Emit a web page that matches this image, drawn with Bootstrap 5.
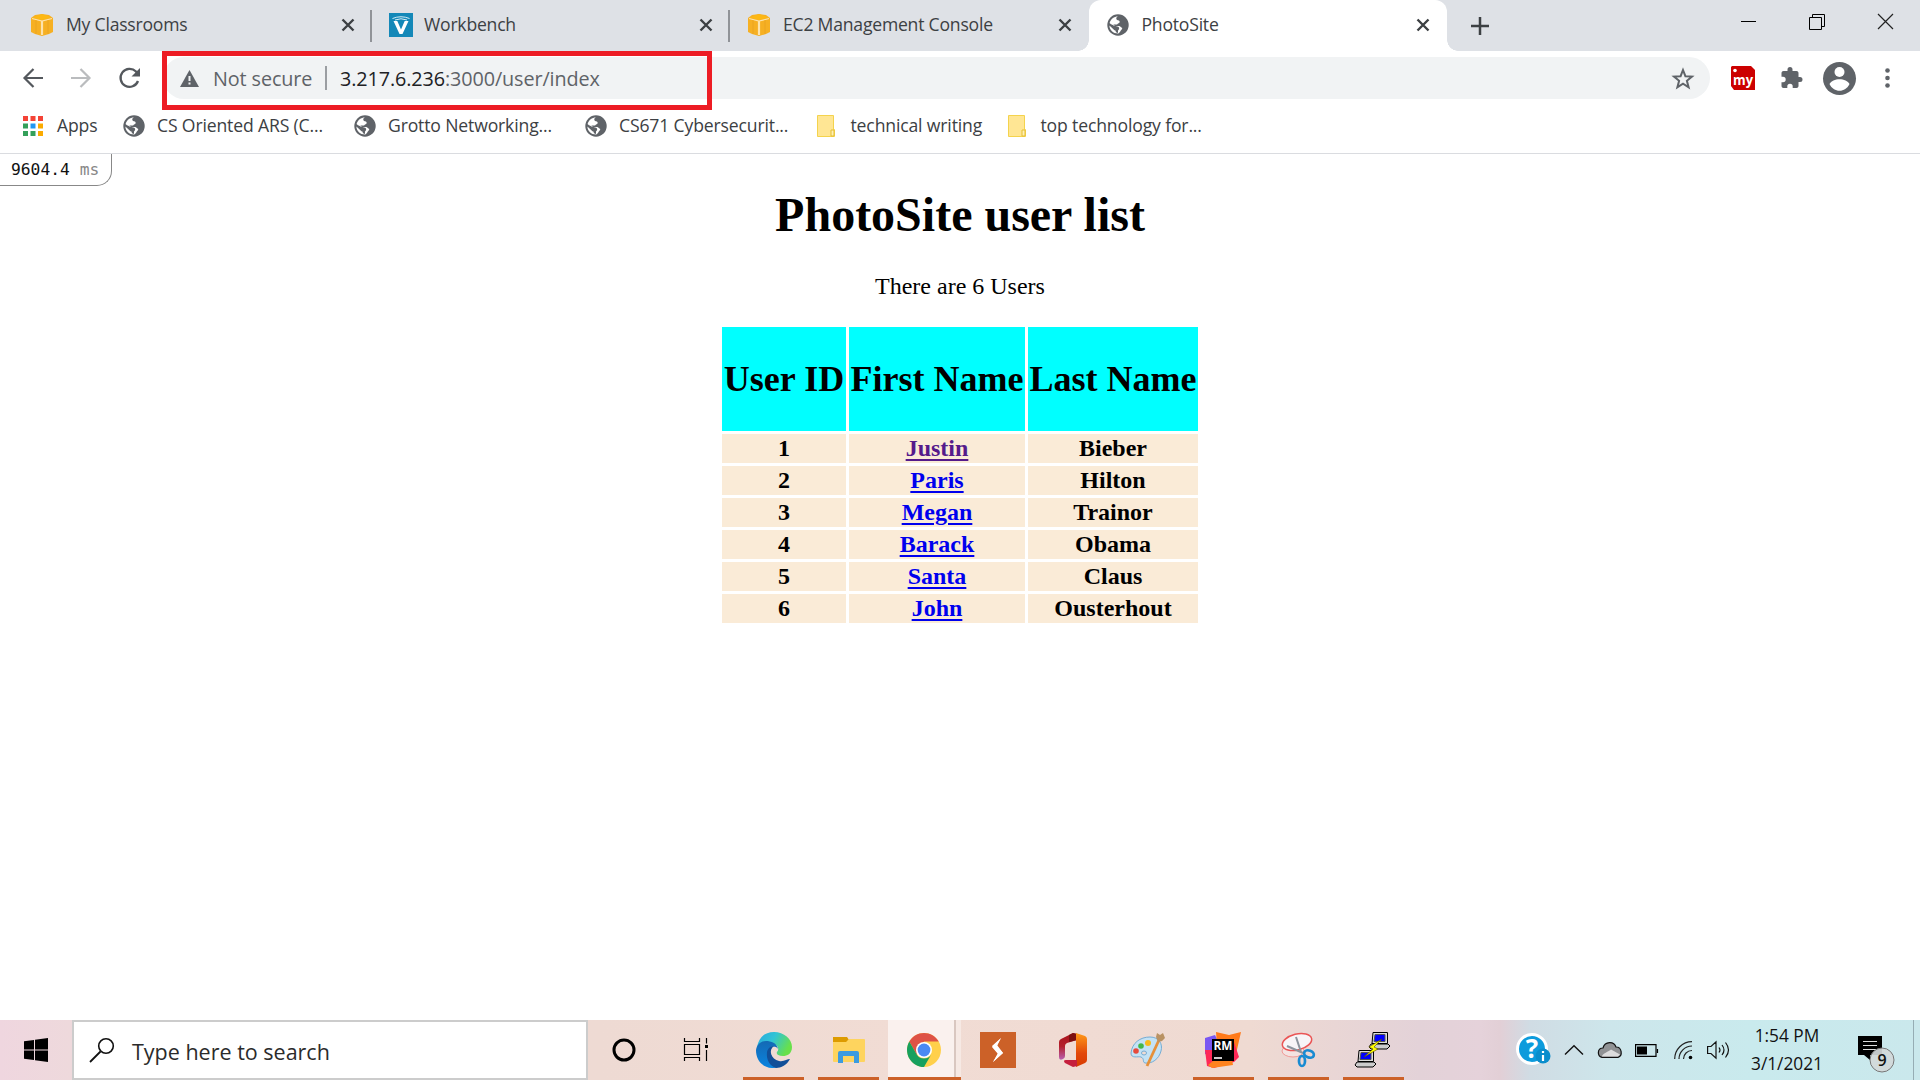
<!DOCTYPE html>
<html lang="en">
<head>
<meta charset="utf-8">
<title>PhotoSite</title>
<link href="https://cdn.jsdelivr.net/npm/bootstrap@5.3.0/dist/css/bootstrap.min.css" rel="stylesheet">
<style>
html,body{height:100%;overflow:hidden}
body{font-family:"Open Sans","Noto Sans",sans-serif;background:#fff;color:#3c4043}
svg{display:block;flex:none;overflow:visible}
.nw{white-space:nowrap;flex:none;line-height:1}
.tabstrip{height:51px;background:#dee1e6;padding-left:13px}
.btab{width:358.5px;height:51px;padding:0 17px 2px 18px;flex:none}
.btab .nw{font-size:17.6px;letter-spacing:-.22px;margin-left:13px;padding-top:1px}
.btab .xicon{margin-left:auto}
.btab.sep{padding-right:15px;border-right:2px solid #909398;border-image:linear-gradient(#0000 11px,#909398 11px,#909398 41px,#0000 41px) 1}
.btab.current{background:#fff;border-radius:12px 12px 0 0;position:relative}
.btab.current::before,.btab.current::after{content:"";position:absolute;bottom:0;width:11px;height:11px}
.btab.current::before{left:-11px;background:radial-gradient(circle at 0 0,#0000 10.5px,#fff 11px)}
.btab.current::after{right:-11px;background:radial-gradient(circle at 100% 0,#0000 10.5px,#fff 11px)}
.toolbar{height:54px;padding-left:23px}
.omni{width:1547px;height:42px;border-radius:21px;background:#f1f3f4;margin-left:23px;padding:0 16px 0 17px;color:#5f6368;flex:none;font-size:19.8px}
.omni .nw{padding-top:1px;letter-spacing:-.1px}
.callout{position:absolute;left:162px;top:51px;width:550px;height:59px;border:5px solid #ed1c24}
.bookmarks{height:49px;border-bottom:1px solid #dadce0;padding:0 0 6px 23px;font-size:17.6px}
.bookmarks .nw{letter-spacing:-.15px;margin-left:12px}
.timing{position:absolute;left:0;top:154px;width:112px;height:32px;border:1px solid #888;border-width:0 1px 1px 0;border-radius:0 0 15px 0;font:16.3px/32px "DejaVu Sans Mono",monospace;padding-left:11px;color:#111;white-space:nowrap}
.timing i{font-style:normal;color:#888}
.page{height:866px;font-family:"Liberation Serif",serif;font-size:24px;color:#000;text-align:center;line-height:27px}
.page h1{font-size:48px;font-weight:700;line-height:54px;margin:0;padding-top:34px}
.page p{margin:31px 0 24px;line-height:27px}
.users{border-collapse:separate;border-spacing:3px;margin:0 auto;font-weight:700}
.users th{background:#0ff;height:104px;font-size:36px;padding:0;line-height:40px}
.users td{background:#faebd7;height:29px;padding:0;line-height:29px}
.users a{color:#00e;text-decoration:underline;text-decoration-thickness:2px;text-underline-offset:3px}
.users a.seen{color:#551a8b}
.taskbar{height:60px;background:linear-gradient(90deg,#efd6df 0,#eed9dc 70px,#eedad3 600px,#f1dcd4 900px,#efdad2 1250px,#e3d2d8 1420px,#e5d2da 1480px,#e2cfd6 1500px,#d0dce4 1530px,#cde6eb 1610px,#c9eaed 1750px,#cae8ec 1920px)}
.startbtn{width:72px}
.searchbox{width:516px;height:60px;background:#fff;border:2px solid #ccc;padding-left:16px;color:#2b2b2b;font-size:21.5px;flex:none}
.searchbox .nw{padding-top:3px}
.app{height:60px;width:61px;flex:none;margin-right:14px;display:flex;align-items:center;justify-content:center}
.app.open{border-bottom:3px solid #cc6128;padding-top:3px}
.app.front{width:73px;margin:0 13px 0 -5.500px;padding-right:1px;background:linear-gradient(90deg,#faf1ee 0 66px,#d9c7c0 66px 68px,#f6e9e4 68px);justify-content:flex-start;padding-left:19px}
.clock{color:#111;font-size:17.3px;text-align:center;width:80px;line-height:28px;flex:none}
</style>
</head>
<body>
<svg width="0" height="0" class="position-absolute">
<defs>
<symbol id="cube" viewBox="0 0 22 22"><path d="M0 4 4 1 11 0l7 1 4 3v14l-4 2-7 2-7-2-4-2z" fill="#f6b023"/><path d="M2 3.500 11 0l9 3.500L11 6z" fill="#fdb813"/><path d="M1 4.500 10.500 7v14M21 4.500 11.500 7v14" fill="none" stroke="#fde3ac" stroke-width="1.200"/><path d="M5 6v14M17 6v14" stroke="#eaa21e" stroke-width=".8"/></symbol>
<symbol id="globe" viewBox="0 0 22 22"><circle cx="11" cy="11" r="10.700" fill="#5f6368"/><path d="M11 2.300c-2 1-2.200 2.500-1 3.700 1.300.6 2.700.3 2.700 2 0 1.500-2 1.300-2.600 2.400H6.600v1.700h5.700c1.600.4 1.500 1.700 3 1.900-.2 2-1.900 2.300-2.300 4l-1.700 1.400C6.500 19.600 2.500 16 2.400 11.400l4.300 4.200c.8 1.300 2.200.3 2.200 2.600L11 19v-2.600c1.500-1 1.600-2.600.2-3.600L8.600 12C4 10.500 3 9.500 2.600 9 3.500 5.500 7 2.500 11 2.300z" fill="#fff"/></symbol>
<symbol id="cross" viewBox="0 0 14 14"><path d="M1.500 1.500l11 11m0-11l-11 11" stroke="#3c4043" stroke-width="2.400"/></symbol>
<symbol id="folder" viewBox="0 0 18 22"><path d="M.5.500h16v14h1v7H.5z" fill="#ffe694" stroke="#f4d34d"/><path d="M14 21v-6h3v6z" fill="#fff0b5" stroke="#e5bf35"/></symbol>
</defs>
</svg>
<div class="d-flex flex-column vh-100 position-relative">
<header class="tabstrip d-flex align-items-center">
 <div class="btab sep d-flex align-items-center"><svg width="22" height="22"><use href="#cube"/></svg><span class="nw">My Classrooms</span><svg class="xicon" width="14" height="14"><use href="#cross"/></svg></div>
 <div class="btab sep d-flex align-items-center"><svg width="24" height="24" viewBox="1 0 24 24"><path fill="#1488b8" d="M0 0h24v24H0z"/><path d="M4.500 8h3.800L12 16.500 15.700 8h3.800L13.500 21h-3z" fill="#fff"/><path d="M3.500 5.500Q12 2 20.500 5.500M6 7q6-2.500 12 0" fill="none" stroke="#d5edf6"/></svg><span class="nw" style="margin-left:10.500px">Workbench</span><svg class="xicon" width="14" height="14"><use href="#cross"/></svg></div>
 <div class="btab d-flex align-items-center"><svg width="22" height="22"><use href="#cube"/></svg><span class="nw">EC2 Management Console</span><svg class="xicon" width="14" height="14"><use href="#cross"/></svg></div>
 <div class="btab current d-flex align-items-center"><svg width="22" height="22"><use href="#globe"/></svg><span class="nw">PhotoSite</span><svg class="xicon" width="14" height="14"><use href="#cross"/></svg></div>
 <svg class="ms-4" width="18" height="18" viewBox="0 0 18 18"><path d="M9 0v18M0 9h18" stroke="#3c4043" stroke-width="2.500"/></svg>
 <div class="d-flex ms-auto align-items-center" style="gap:53px;padding:0 27px 8px 0"><svg width="15" height="16"><path d="M0 7.500h15" stroke="#000"/></svg><svg width="16" height="16" viewBox="0 0 16 16"><path d="M.5 3.500h12v12H.5zM3.500 3.500v-3h12v12h-3" fill="none" stroke="#000"/></svg><svg width="15" height="15" viewBox="0 0 15 15"><path d="M0 0l15 15M15 0L0 15" stroke="#222" stroke-width="1.200"/></svg></div>
</header>
<div class="toolbar d-flex align-items-center">
 <svg width="20" height="20" viewBox="0 0 20 20"><path d="M20 10H2M10.500 1 1.500 10l9 9" fill="none" stroke="#54585d" stroke-width="2.200"/></svg>
 <svg style="margin-left:28px" width="20" height="20" viewBox="0 0 20 20"><path d="M0 10h18M9.500 1l9 9-9 9" fill="none" stroke="#babcbe" stroke-width="2.200"/></svg>
 <svg style="margin-left:28px" width="21" height="20" viewBox="0 0 21 20"><path d="M19 13a9 9 0 1 1-2-9.500l2 2.500" fill="none" stroke="#54585d" stroke-width="2.300"/><path d="M21 0v8.500h-8.500z" fill="#54585d"/></svg>
 <div class="omni d-flex align-items-center">
  <svg width="19" height="17" viewBox="0 0 19 17"><path d="M9.500 0 19 17H0z" fill="#5f6368"/><path d="M9.500 6v5M9.500 12.500v2" stroke="#f1f3f4" stroke-width="2"/></svg>
  <span class="nw" style="margin-left:14px;width:112px">Not secure</span><span style="width:2px;height:24px;background:#9b9ea2"></span>
  <span class="nw" style="margin-left:13px"><span style="color:#202124">3.217.6.236</span>:3000/user/index</span>
  <svg class="ms-auto" width="22" height="21" viewBox="0 0 22 21"><path d="M11 2l2.400 6.200 6.600.4-5.100 4.200 1.700 6.500L11 15.700l-5.600 3.600 1.700-6.500L2 8.600l6.600-.4z" fill="none" stroke="#5f6368" stroke-width="2"/></svg>
 </div>
 <svg style="margin-left:21px" width="24" height="24" viewBox="0 0 24 24"><path d="M1 0h19l4 4v20H3l-3-4V1z" fill="#c00"/><circle cx="4" cy="4.500" r="1.800" fill="#fff"/><text x="12" y="19" text-anchor="middle" font-size="15" font-weight="700" fill="#fff" textLength="20" lengthAdjust="spacingAndGlyphs">my</text></svg>
 <svg style="margin-left:25px" width="22" height="22" viewBox="1 1 21 22"><path fill="#5f6368" d="M20.500 11H19V7c0-1.100-.9-2-2-2h-4V3.500a2.500 2.500 0 0 0-5 0V5H4c-1.100 0-2 .9-2 2v3.800h1.500a2.700 2.700 0 0 1 0 5.400H2V20c0 1.100.9 2 2 2h3.800v-1.500a2.700 2.700 0 0 1 5.400 0V22H17c1.100 0 2-.9 2-2v-4h1.500a2.500 2.500 0 0 0 0-5z"/></svg>
 <svg style="margin-left:21px" width="33" height="33" viewBox="0 0 33 33"><circle cx="16.500" cy="16.500" r="16.500" fill="#5f6368"/><circle cx="16.500" cy="10" r="5" fill="#fff"/><path d="M6.500 22c3-6.500 17-6.500 20 0-4 9-16 9-20 0z" fill="#fff"/></svg>
 <svg style="margin-left:29px" width="5" height="20" viewBox="0 0 5 20"><g fill="#5f6368"><circle cx="2.500" cy="2.500" r="2.300"/><circle cx="2.500" cy="10" r="2.300"/><circle cx="2.500" cy="17.500" r="2.300"/></g></svg>
</div>
<div class="callout"></div>
<nav class="bookmarks d-flex align-items-center">
 <svg width="20" height="20" viewBox="0 0 20 20"><path d="M0 0h5v5H0zM7.500 0h5v5h-5zM15 0h5v5h-5z" fill="#f44336"/><path d="M0 7.500h5v5H0zM0 15h5v5H0zM7.500 15h5v5h-5z" fill="#34a05a"/><path d="M7.500 7.500h5v5h-5z" fill="#2196f3"/><path d="M15 7.500h5v5h-5zM15 15h5v5h-5z" fill="#fbab00"/></svg><span class="nw" style="width:68px;margin-left:14px">Apps</span>
 <svg width="22" height="22" style="margin-left:-2px"><use href="#globe"/></svg><span class="nw" style="width:197px">CS Oriented ARS (C...</span>
 <svg width="22" height="22"><use href="#globe"/></svg><span class="nw" style="width:197px">Grotto Networking...</span>
 <svg width="22" height="22"><use href="#globe"/></svg><span class="nw" style="width:198px">CS671 Cybersecurit...</span>
 <svg width="18" height="22"><use href="#folder"/></svg><span class="nw" style="width:157px;margin-left:15.500px">technical writing</span>
 <svg width="18" height="22"><use href="#folder"/></svg><span class="nw" style="margin-left:15px">top technology for...</span>
</nav>
<div class="timing">9604.4 <i>ms</i></div>
<main class="page">
 <h1>PhotoSite user list</h1>
 <p>There are 6 Users</p>
 <table class="users">
 <thead><tr><th style="width:124px">User ID</th><th style="width:176px">First Name</th><th style="width:170px">Last Name</th></tr></thead>
 <tbody>
 <tr><td>1</td><td><a class="seen" href="#">Justin</a></td><td>Bieber</td></tr>
 <tr><td>2</td><td><a href="#">Paris</a></td><td>Hilton</td></tr>
 <tr><td>3</td><td><a href="#">Megan</a></td><td>Trainor</td></tr>
 <tr><td>4</td><td><a href="#">Barack</a></td><td>Obama</td></tr>
 <tr><td>5</td><td><a href="#">Santa</a></td><td>Claus</td></tr>
 <tr><td>6</td><td><a href="#">John</a></td><td>Ousterhout</td></tr>
 </tbody></table>
</main>
<footer class="taskbar d-flex align-items-center">
 <div class="startbtn d-flex justify-content-center"><svg width="24" height="24" viewBox="0 0 24 24"><path d="M0 3.200 10 2v9.500H0zM11 1.800 24 0v11.500H11zM0 12.500h10V22L0 20.700zM11 12.500h13V24l-13-1.800z"/></svg></div>
 <div class="searchbox d-flex align-items-center"><svg width="24" height="24" viewBox="0 0 24 24"><circle cx="16" cy="8" r="7.300" fill="none" stroke="#111" stroke-width="1.600"/><path d="M10.500 13.500 0 24" stroke="#111" stroke-width="1.800"/></svg><span class="nw" style="margin-left:18px">Type here to search</span></div>
 <div class="app" style="margin-left:5px"><svg width="24" height="24" viewBox="0 0 24 24"><circle cx="12" cy="12" r="10" fill="none" stroke="#000" stroke-width="3"/></svg></div>
 <div class="app" style="margin-right:13px;margin-left:-3px"><svg width="24" height="24" viewBox="0 0 24 24"><path d="M.5 0v3.500h15V0M.5 6.500h15v10H.5zM.5 23v-3.500h15V23M22.500 0v5.500M22.500 12v11" fill="none" stroke="#000" stroke-width="1.200"/><path d="M21 7h3v3h-3z"/></svg></div>
 <div class="app open" style="margin-left:4px"><svg width="36" height="36" viewBox="0 0 36 36"><defs><linearGradient id="eg" x1="0" y1="0" x2="1" y2=".4"><stop offset="0" stop-color="#28a8df"/><stop offset=".5" stop-color="#31c4d5"/><stop offset="1" stop-color="#68e04b"/></linearGradient><linearGradient id="eb" x1="0" y1="0" x2="0" y2="1"><stop stop-color="#1469b4"/><stop offset="1" stop-color="#0a84df"/></linearGradient></defs><path d="M1 15C3 5 9 0 18 0c10 0 18 7 18 15 0 7-5 9-9 9-5 0-7-2-6-4 2-2 2-6-3-8C11 9 5 10 1 15z" fill="url(#eg)"/><path d="M0 18C1 12 5 9 10 9c5 0 11 2 12 8-3-4-9-3-9 3 0 8 7 12 11 14-3 2-6 2-8 2C5 35 0 27 0 18z" fill="url(#eb)"/><path d="M11 20c1-4 4-6 7-6-6 4-3 13 5 15 5 1 8-2 11-2-3 6-9 9-14 9-6-2-10-8-9-16z" fill="#124f98"/></svg></div>
 <div class="app open"><svg width="32" height="26" viewBox="0 0 32 26"><path d="M0 0h14l2 3-3 3H0z" fill="#dd9b00"/><path d="M0 5h13l3-3h15q1 0 1 1v21q0 1-1 1H1q-1 0-1-1z" fill="#fed45e"/><path d="M5 26V16q0-2 2-2h17q2 0 2 2v10h-5v-7H10v7z" fill="#3c9be0"/></svg></div>
 <div class="app open front"><svg width="34" height="34" viewBox="-17 -17 34 34"><circle r="17" fill="#ffd04b"/><path d="M-14.700-8.500A17 17 0 0 1 14.700-8.500H0L-7.400 4.200z" fill="#de5246"/><path d="M-14.700-8.500A17 17 0 0 0 0 17L7.400 4.200A8.500 8.500 0 0 1-7.400 4.200z" fill="#17a05e"/><circle r="8" fill="#fff"/><circle r="6.400" fill="#4a89f3"/></svg></div>
 <div class="app" style="margin-left:-6px"><svg width="36" height="36" viewBox="0 0 36 36"><path d="M0 0h36v36H0z" fill="#cc6128"/><path d="M21 6l-9 8 6 7-5 9 10-9-6-7z" fill="#fff"/><path d="M21 6l-4 7 6 8-10 9 5-8-6-7z" fill="#fff"/></svg></div>
 <div class="app"><svg width="28" height="34" viewBox="0 0 28 34"><defs><linearGradient id="ol" x1="0" y1="0" x2="0" y2="1"><stop stop-color="#a8131b"/><stop offset=".5" stop-color="#b4202c"/><stop offset="1" stop-color="#b85fb0"/></linearGradient><linearGradient id="or" x1="0" y1="0" x2="0" y2="1"><stop stop-color="#ff9a18"/><stop offset=".6" stop-color="#e2480b"/><stop offset="1" stop-color="#d83b01"/></linearGradient></defs><path d="M0 9q0-2 2-3L14 0l4 1v6L8 10q-2 1-2 3v10q0 2-2 3-4 2-4-2z" fill="url(#ol)"/><path d="M14 0l4 1v6l-8 2V2z" fill="#7c1010"/><path d="M17 0l9 3q2 1 2 3v21q0 2-2 3l-9 4z" fill="url(#or)"/><path d="M5 28q0-1 2-1h11v6l-4 1-8-4q-1-1-1-2z" fill="#c51f3d"/></svg></div>
 <div class="app"><svg width="36" height="34" viewBox="0 0 36 34"><path d="M1 20C2 10 10 4 20 4c9 0 13 7 11 14-2 8-9 13-16 12-3-1 0-4-4-6-3-1-10 2-10-4z" fill="#c3e2f5" stroke="#75acd3"/><circle cx="6" cy="18" r="2.800" fill="#e64a3c"/><circle cx="11" cy="13" r="2.800" fill="#43b649"/><circle cx="18" cy="10" r="3" fill="#f7b91c"/><ellipse cx="14" cy="20" rx="2.500" ry="2" fill="#efdcd4" stroke="#75acd3"/><path d="M29 7 17 33" stroke="#e5903a" stroke-width="2.800"/><path d="M26 4l1-4 3 2 3-2 2 5-3 3-4 1z" fill="#b99263"/></svg></div>
 <div class="app open"><svg width="36" height="36" viewBox="0 0 36 36"><path d="M0 6 10 3l4 8v16L0 22z" fill="#7957f2"/><path d="M11 0l13 3 12-3-5 22-19-9z" fill="#ff7a1a"/><path d="M0 18h10l19-8 5 15-5 5-20 6-7-2z" fill="#fe2857"/><path d="M3 33l5-4 19-1 1 5-21 3z" fill="#ff831f"/><path d="M7 7h22v22H7z"/><path d="M9 26h8" stroke="#fff" stroke-width="1.600"/><text x="18" y="18" text-anchor="middle" font-size="12" font-weight="700" fill="#fff" textLength="19" lengthAdjust="spacingAndGlyphs">RM</text></svg></div>
 <div class="app open"><svg width="34" height="34" viewBox="0 0 34 34"><ellipse cx="12" cy="18" rx="11" ry="6" fill="#f4e3e1" stroke="#f19a96"/><ellipse cx="16" cy="9" rx="15" ry="8" transform="rotate(-14 16 9)" fill="#f7f5f7" stroke="#ea5555" stroke-width="1.500"/><path d="M15 4l5 15M6 13l16 7" stroke="#8c949d" stroke-width="2"/><ellipse cx="28" cy="21" rx="5" ry="3.500" fill="none" stroke="#188bd2" stroke-width="2.700" transform="rotate(20 28 21)"/><ellipse cx="21" cy="28" rx="3" ry="5" fill="none" stroke="#188bd2" stroke-width="2.700"/></svg></div>
 <div class="app open me-0"><svg width="36" height="36" viewBox="0 0 36 36"><g id="pc"><path d="M16 12h17l2 2-3 3H16l-2-2z" fill="#ccc" stroke="#000"/><path d="M18 .5h14.500v11H17z" fill="#ddd" stroke="#000"/><path d="M20 2.500h10v7H19z" fill="#00f" stroke="#555"/></g><use href="#pc" x="-14" y="18"/><path d="M27 7 14 15l4 2-9 8 14-8-4-2z" fill="#ff0" stroke="#554c00" stroke-width=".6"/></svg></div>
 <div class="d-flex align-items-center ms-auto">
 <svg width="36" height="34" viewBox="0 0 36 34"><circle cx="16" cy="16" r="14.500" fill="#0c9bdc" stroke="#fff" stroke-width="3"/><text x="16" y="25" font-size="26" font-weight="700" fill="#fff" text-anchor="middle">?</text><circle cx="27" cy="23" r="7.500" fill="#0a8dcc"/><path d="M27 22v6M27 18v2" stroke="#fff" stroke-width="2.200"/></svg>
 <svg style="margin-left:13px" width="18" height="10" viewBox="0 0 18 10"><path d="M0 9.500 9 .7l9 8.800" fill="none" stroke="#111" stroke-width="1.400"/></svg>
 <svg style="margin-left:15px" width="24" height="16" viewBox="0 0 24 16"><path d="M4 15.300C-1 14-1 6 5 6 7-1 16-1 18 5c6 0 7 9 2 10.300z" fill="#909294" stroke="#111" stroke-width="1.200"/><path d="M4 14.600c0-3 7-5 9-7l9 5-2 2z" fill="#ddd"/></svg>
 <svg style="margin-left:13px" width="23" height="13" viewBox="0 0 23 13"><path d="M.6.600H21v11.800H.6zM22.500 5v4" fill="none" stroke="#000" stroke-width="1.200"/><path d="M2 2.500h10v8H2z"/></svg>
 <svg style="margin-left:16px" width="18" height="18" viewBox="0 0 18 18"><path d="M.7 18A17.300 17.300 0 0 1 18 .7M5 18A13 13 0 0 1 18 5M9.500 18A8.500 8.500 0 0 1 18 9.500" fill="none" stroke="#222" stroke-width="1.200"/><circle cx="16.500" cy="16.500" r="1.800"/></svg>
 <svg style="margin-left:15px" width="23" height="18" viewBox="0 0 23 18"><path d="M.6 5.500H4L9 .8v16.400l-5-4.700H.6zM12 6.500q2 2.500 0 5M15 4q4 5 0 10M18.500 1.500q6 7.500 0 15" fill="none" stroke="#111" stroke-width="1.200"/></svg>
 <div class="clock" style="margin-left:17px"><div>1:54 PM</div><div>3/1/2021</div></div>
 <svg style="margin:8px 19px 0 31px" width="36" height="36" viewBox="0 0 36 36"><path d="M0 0h24v19H12v5l-6-5H0z"/><path d="M5 5.500h14M5 9.500h14M5 13.500h14" stroke="#ddd"/><circle cx="24" cy="24" r="12" fill="#d2d8d9" fill-opacity=".92" stroke="#777"/><text x="24" y="30" font-size="16" text-anchor="middle" font-weight="600" fill="#111">9</text></svg>
 <span style="width:7px;height:60px;border-left:1.500px solid #96adb4"></span>
 </div>
</footer>
</div>
<script src="https://cdn.jsdelivr.net/npm/bootstrap@5.3.0/dist/js/bootstrap.bundle.min.js"></script>
</body>
</html>
